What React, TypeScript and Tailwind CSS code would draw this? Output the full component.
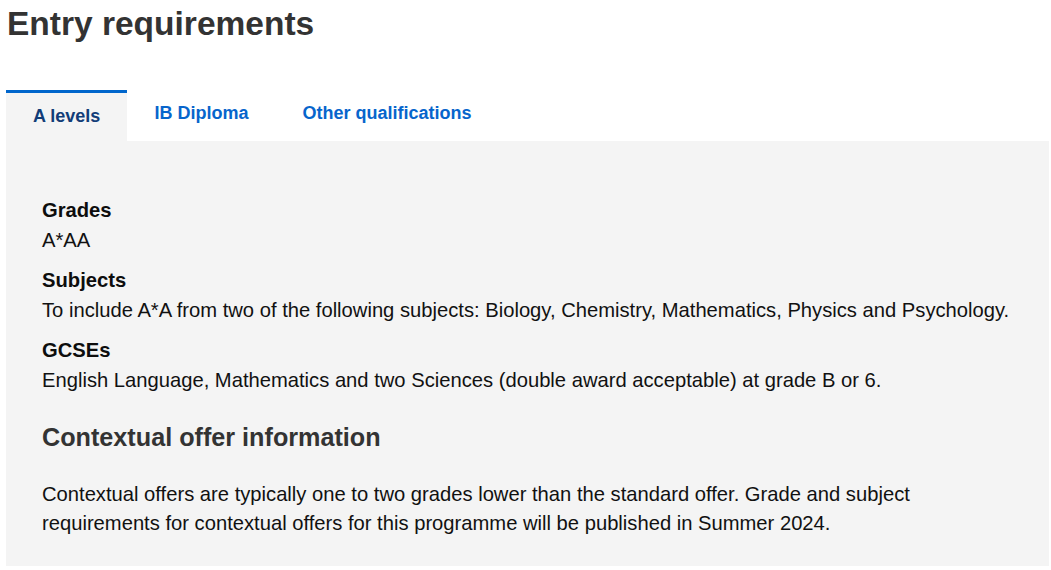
import React from "react";

const tabs = ["A levels", "IB Diploma", "Other qualifications"];

const requirements = [
    { label: "Grades", value: "A*AA" },
    {
        label: "Subjects",
        value: "To include A*A from two of the following subjects: Biology, Chemistry, Mathematics, Physics and Psychology.",
    },
    {
        label: "GCSEs",
        value: "English Language, Mathematics and two Sciences (double award acceptable) at grade B or 6.",
    },
];

export default function App() {
    return (
        <div className="min-h-[570px] bg-white font-['Liberation_Sans',Arial,sans-serif] pl-[6px] pr-[2px]">
            <h1 className="mt-[4px] text-[33.5px] leading-[40px] font-bold text-[#333333] pl-[1px]">
                Entry requirements
            </h1>

            {/* tab strip */}
            <div className="mt-[46px] flex items-start">
                {tabs.map((tab, i) =>
                    i === 0 ? (
                        <div
                            key={tab}
                            className="h-[51px] px-[27px] pt-[10px] border-t-[3px] border-[#0066cc] bg-[#f4f4f4] text-[18px] leading-[27px] font-bold text-[#123d78]"
                        >
                            {tab}
                        </div>
                    ) : (
                        <a
                            key={tab}
                            href="#"
                            className="px-[27px] pt-[10px] text-[18px] leading-[27px] font-bold text-[#0765cc]"
                        >
                            {tab}
                        </a>
                    )
                )}
            </div>

            {/* panel */}
            <div className="bg-[#f4f4f4] pl-[36px] pr-[36px] pt-[54px] pb-[28px] text-[20.2px] text-[#111111]">
                <dl>
                    {requirements.map((req) => (
                        <div key={req.label} className="mb-[10px] last:mb-0">
                            <dt className="font-bold leading-[30px] text-[#0d0d0d]">{req.label}</dt>
                            <dd className="leading-[30px]">{req.value}</dd>
                        </div>
                    ))}
                </dl>

                <h2 className="mt-[27px] text-[25.2px] leading-[30px] font-bold text-[#333333]">
                    Contextual offer information
                </h2>
                <p className="mt-[28px] leading-[29px]">
                    Contextual offers are typically one to two grades lower than the standard offer. Grade and subject
                    requirements for contextual offers for this programme will be published in Summer 2024.
                </p>
            </div>
        </div>
    );
}
